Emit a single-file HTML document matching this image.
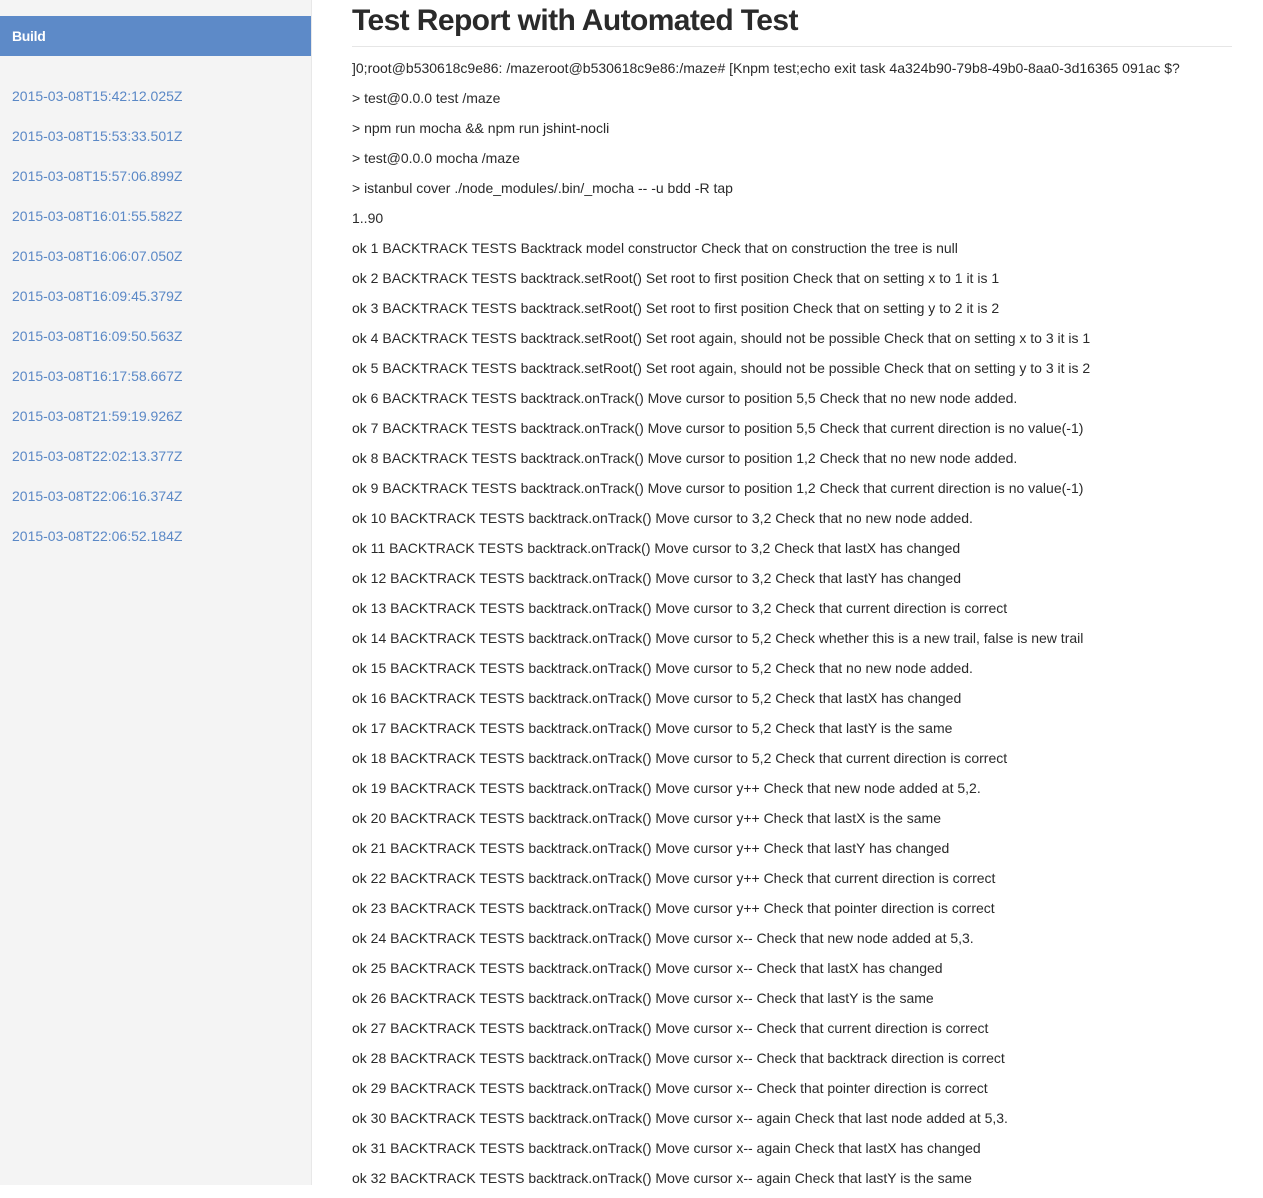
<!DOCTYPE html>
<html><head><meta charset="utf-8"><style>
html,body{margin:0;padding:0;background:#fff;}
body{width:1263px;height:1185px;overflow:hidden;position:relative;font-family:"Liberation Sans",Arial,sans-serif;color:#333;}
.side{position:absolute;left:0;top:0;width:311px;height:1185px;background:#f4f4f4;border-right:1px solid #e8e8e8;}
.build{position:absolute;left:0;top:16px;width:311px;height:40px;background:#5d8ac8;color:#fff;font-weight:bold;font-size:14px;line-height:40px;padding-left:12px;box-sizing:border-box;letter-spacing:-0.3px;}
.links{position:absolute;left:12px;top:86px;}
.links div{height:40px;line-height:20px;font-size:14px;color:#5a88c6;}
.main{position:absolute;left:352px;top:0;width:880px;}
h1{margin:0;position:absolute;top:4px;left:0;font-size:30px;font-weight:bold;color:#2a2a2a;white-space:nowrap;letter-spacing:-0.6px;line-height:34px;}
.hr{position:absolute;top:46px;left:0;width:880px;height:1px;background:#e6e6e6;}
.lines{position:absolute;top:58px;left:0;}
.lines div{height:30px;line-height:20px;font-size:14px;white-space:nowrap;color:#2a2a2a;}
</style></head><body>
<div class="side">
<div class="build">Build</div>
<div class="links">
<div>2015-03-08T15:42:12.025Z</div>
<div>2015-03-08T15:53:33.501Z</div>
<div>2015-03-08T15:57:06.899Z</div>
<div>2015-03-08T16:01:55.582Z</div>
<div>2015-03-08T16:06:07.050Z</div>
<div>2015-03-08T16:09:45.379Z</div>
<div>2015-03-08T16:09:50.563Z</div>
<div>2015-03-08T16:17:58.667Z</div>
<div>2015-03-08T21:59:19.926Z</div>
<div>2015-03-08T22:02:13.377Z</div>
<div>2015-03-08T22:06:16.374Z</div>
<div>2015-03-08T22:06:52.184Z</div>
</div>
</div>
<div class="main">
<h1>Test Report with Automated Test</h1>
<div class="hr"></div>
<div class="lines">
<div>]0;root@b530618c9e86: /mazeroot@b530618c9e86:/maze# [Knpm test;echo exit task 4a324b90-79b8-49b0-8aa0-3d16365 091ac $?</div>
<div>&gt; test@0.0.0 test /maze</div>
<div>&gt; npm run mocha &amp;&amp; npm run jshint-nocli</div>
<div>&gt; test@0.0.0 mocha /maze</div>
<div>&gt; istanbul cover ./node_modules/.bin/_mocha -- -u bdd -R tap</div>
<div>1..90</div>
<div>ok 1 BACKTRACK TESTS Backtrack model constructor Check that on construction the tree is null</div>
<div>ok 2 BACKTRACK TESTS backtrack.setRoot() Set root to first position Check that on setting x to 1 it is 1</div>
<div>ok 3 BACKTRACK TESTS backtrack.setRoot() Set root to first position Check that on setting y to 2 it is 2</div>
<div>ok 4 BACKTRACK TESTS backtrack.setRoot() Set root again, should not be possible Check that on setting x to 3 it is 1</div>
<div>ok 5 BACKTRACK TESTS backtrack.setRoot() Set root again, should not be possible Check that on setting y to 3 it is 2</div>
<div>ok 6 BACKTRACK TESTS backtrack.onTrack() Move cursor to position 5,5 Check that no new node added.</div>
<div>ok 7 BACKTRACK TESTS backtrack.onTrack() Move cursor to position 5,5 Check that current direction is no value(-1)</div>
<div>ok 8 BACKTRACK TESTS backtrack.onTrack() Move cursor to position 1,2 Check that no new node added.</div>
<div>ok 9 BACKTRACK TESTS backtrack.onTrack() Move cursor to position 1,2 Check that current direction is no value(-1)</div>
<div>ok 10 BACKTRACK TESTS backtrack.onTrack() Move cursor to 3,2 Check that no new node added.</div>
<div>ok 11 BACKTRACK TESTS backtrack.onTrack() Move cursor to 3,2 Check that lastX has changed</div>
<div>ok 12 BACKTRACK TESTS backtrack.onTrack() Move cursor to 3,2 Check that lastY has changed</div>
<div>ok 13 BACKTRACK TESTS backtrack.onTrack() Move cursor to 3,2 Check that current direction is correct</div>
<div>ok 14 BACKTRACK TESTS backtrack.onTrack() Move cursor to 5,2 Check whether this is a new trail, false is new trail</div>
<div>ok 15 BACKTRACK TESTS backtrack.onTrack() Move cursor to 5,2 Check that no new node added.</div>
<div>ok 16 BACKTRACK TESTS backtrack.onTrack() Move cursor to 5,2 Check that lastX has changed</div>
<div>ok 17 BACKTRACK TESTS backtrack.onTrack() Move cursor to 5,2 Check that lastY is the same</div>
<div>ok 18 BACKTRACK TESTS backtrack.onTrack() Move cursor to 5,2 Check that current direction is correct</div>
<div>ok 19 BACKTRACK TESTS backtrack.onTrack() Move cursor y++ Check that new node added at 5,2.</div>
<div>ok 20 BACKTRACK TESTS backtrack.onTrack() Move cursor y++ Check that lastX is the same</div>
<div>ok 21 BACKTRACK TESTS backtrack.onTrack() Move cursor y++ Check that lastY has changed</div>
<div>ok 22 BACKTRACK TESTS backtrack.onTrack() Move cursor y++ Check that current direction is correct</div>
<div>ok 23 BACKTRACK TESTS backtrack.onTrack() Move cursor y++ Check that pointer direction is correct</div>
<div>ok 24 BACKTRACK TESTS backtrack.onTrack() Move cursor x-- Check that new node added at 5,3.</div>
<div>ok 25 BACKTRACK TESTS backtrack.onTrack() Move cursor x-- Check that lastX has changed</div>
<div>ok 26 BACKTRACK TESTS backtrack.onTrack() Move cursor x-- Check that lastY is the same</div>
<div>ok 27 BACKTRACK TESTS backtrack.onTrack() Move cursor x-- Check that current direction is correct</div>
<div>ok 28 BACKTRACK TESTS backtrack.onTrack() Move cursor x-- Check that backtrack direction is correct</div>
<div>ok 29 BACKTRACK TESTS backtrack.onTrack() Move cursor x-- Check that pointer direction is correct</div>
<div>ok 30 BACKTRACK TESTS backtrack.onTrack() Move cursor x-- again Check that last node added at 5,3.</div>
<div>ok 31 BACKTRACK TESTS backtrack.onTrack() Move cursor x-- again Check that lastX has changed</div>
<div>ok 32 BACKTRACK TESTS backtrack.onTrack() Move cursor x-- again Check that lastY is the same</div>
</div>
</div>
</body></html>
